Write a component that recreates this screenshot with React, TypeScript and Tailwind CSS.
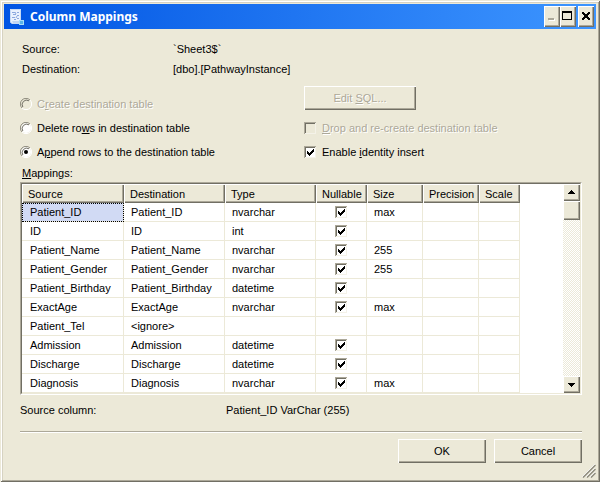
import type { ReactNode } from "react";

const raised =
  "bg-[#ece9d8] shadow-[inset_1px_1px_0_#fff,inset_-1px_-1px_0_#716f64,inset_-2px_-2px_0_#aca899]";
const disabledText = "text-[#aca899] [text-shadow:1px_1px_0_#fff]";

type Row = [name: string, target: string, type: string, nullable: boolean, size: string];

const rows: Row[] = [
  ["Patient_ID", "Patient_ID", "nvarchar", true, "max"],
  ["ID", "ID", "int", true, ""],
  ["Patient_Name", "Patient_Name", "nvarchar", true, "255"],
  ["Patient_Gender", "Patient_Gender", "nvarchar", true, "255"],
  ["Patient_Birthday", "Patient_Birthday", "datetime", true, ""],
  ["ExactAge", "ExactAge", "nvarchar", true, "max"],
  ["Patient_Tel", "<ignore>", "", false, ""],
  ["Admission", "Admission", "datetime", true, ""],
  ["Discharge", "Discharge", "datetime", true, ""],
  ["Diagnosis", "Diagnosis", "nvarchar", true, "max"],
];

const headers = ["Source", "Destination", "Type", "Nullable", "Size", "Precision", "Scale"];

function CheckBox({ id, checked, disabled, label }: { id?: string; checked?: boolean; disabled?: boolean; label?: string }) {
  return (
    <span className="inline-grid size-3 shrink-0">
      <input
        id={id}
        type="checkbox"
        aria-label={label}
        defaultChecked={checked}
        disabled={disabled}
        className={`peer col-start-1 row-start-1 size-3 appearance-none shadow-[inset_1px_1px_0_#aca899,inset_-1px_-1px_0_#f4f2e8,inset_2px_2px_0_#716f64] ${disabled ? "bg-[#ece9d8]" : "bg-white"}`}
      />
      <svg viewBox="0 0 12 12" shapeRendering="crispEdges" className="pointer-events-none invisible col-start-1 row-start-1 size-3 peer-checked:visible">
        <path d="M3 5h1v3h-1zM4 6h1v3h-1zM5 7h1v3h-1zM6 6h1v3h-1zM7 5h1v3h-1zM8 4h1v3h-1zM9 3h1v3h-1z" fill="#000" />
      </svg>
    </span>
  );
}

function Radio({ id, checked, disabled, children }: { id: string; checked?: boolean; disabled?: boolean; children: ReactNode }) {
  return (
    <div className="flex h-6 items-center gap-1">
      <span className="inline-grid size-3 shrink-0">
        <input id={id} name="mode" type="radio" defaultChecked={checked} disabled={disabled} className="peer col-start-1 row-start-1 size-3 appearance-none rounded-full" />
        <svg viewBox="0 0 12 12" className="pointer-events-none col-start-1 row-start-1 size-3">
          <circle cx="6" cy="6" r="5" fill={disabled ? "#ece9d8" : "#fff"} />
          <path d="M10 2A5.5 5.5 0 0 1 2 10" fill="none" stroke="#fff" />
          <path d="M2 10A5.5 5.5 0 0 1 10 2" fill="none" stroke="#8f8c7e" />
          <path d="M2.8 9A4.5 4.5 0 0 1 9 2.8" fill="none" stroke="#716f64" />
        </svg>
        <svg viewBox="0 0 12 12" className="pointer-events-none invisible col-start-1 row-start-1 size-3 peer-checked:visible">
          <circle cx="6" cy="6" r="2" fill="#000" />
        </svg>
      </span>
      <label htmlFor={id} className={`pl-px ${disabled ? disabledText : ""}`}>{children}</label>
    </div>
  );
}

function TitleIcon() {
  return (
    <svg viewBox="0 0 16 16" className="size-4" aria-hidden="true">
      <path d="M0 0h11v11l1 4H2l-2-2z" fill="#e9f1fd" />
      <path d="M0.500 0.500h10v10.500l1 3.500H2L0.500 13z" fill="none" stroke="#c5d9f6" />
      <path d="M2 12h8v2H3z" fill="#c2d5f2" />
      <path d="M2 3.500h3M7 3.500h2M3 5.500h3M7 6.500h2M2 8.500h3M7 9.500h2M4 10.500h2M5 3l1 2M7 7l-1 2" stroke="#8ba8de" fill="none" />
      <rect x="9.500" y="11.500" width="4" height="4" fill="#58b4ea" stroke="#a7dcf7" />
    </svg>
  );
}

export default function App() {
  return (
    <div className="flex min-h-screen flex-col bg-[#ece9d8] p-1 font-['Liberation_Sans',Arial,sans-serif] text-[11px] leading-4 text-black shadow-[inset_1px_1px_0_#ece9d8,inset_-1px_-1px_0_#716f64,inset_2px_2px_0_#fff,inset_-2px_-2px_0_#aca899,inset_3px_3px_0_#d6d2c2]">
      <header className="flex h-[25px] items-center bg-linear-to-r from-[#0054e3] to-[#3d95ff] pr-0.5 pl-1.5">
        <TitleIcon />
        <h1 className="flex-1 pl-1 font-['Noto_Sans','Open_Sans',sans-serif] text-[12px] font-bold text-white">Column Mappings</h1>
        <button type="button" disabled aria-label="Minimize" className={`flex h-[21px] w-4 items-center justify-center ${raised}`}>
          <svg viewBox="0 0 16 21" shapeRendering="crispEdges" className="h-[21px] w-4">
            <path d="M5 13h6v2h-6z" fill="#fff" />
            <path d="M4 12h6v2h-6z" fill="#aca899" />
          </svg>
        </button>
        <button type="button" aria-label="Maximize" className={`flex h-[21px] w-4 items-center justify-center ${raised}`}>
          <svg viewBox="0 0 16 21" shapeRendering="crispEdges" className="h-[21px] w-4">
            <path d="M2 5h10v9h-10zM3 7v6h8v-6z" fill="#000" fillRule="evenodd" />
          </svg>
        </button>
        <button type="button" aria-label="Close" className={`ml-0.5 flex h-[21px] w-4 items-center justify-center ${raised}`}>
          <svg viewBox="0 0 16 21" shapeRendering="crispEdges" className="h-[21px] w-4">
            <path d="M4 6h2v1h1v1h2v-1h1v-1h2v2h-1v1h-1v2h1v1h1v2h-2v-1h-1v-1h-2v1h-1v1h-2v-2h1v-1h1v-2h-1v-1h-1z" fill="#000" />
          </svg>
        </button>
      </header>

      <main className="flex flex-1 flex-col pt-2.5 pr-3.5 pl-4">
        <dl className="grid grid-cols-[151px_1fr] pl-0.5 leading-5">
          <dt>Source:</dt>
          <dd>`Sheet3$`</dd>
          <dt>Destination:</dt>
          <dd>[dbo].[PathwayInstance]</dd>
        </dl>

        <div className="grid grid-cols-[284px_1fr] pt-[13px]">
          <div>
            <Radio id="create" disabled>C<u>r</u>eate destination table</Radio>
            <Radio id="delete">Delete ro<u>w</u>s in destination table</Radio>
            <Radio id="append" checked>A<u>p</u>pend rows to the destination table</Radio>
          </div>
          <div>
            <div className="flex h-6 items-start">
              <button type="button" disabled className={`-mt-1.5 h-6 w-28 ${raised} ${disabledText}`}>Edit <u>S</u>QL...</button>
            </div>
            <div className="flex h-6 items-center gap-1.5">
              <CheckBox id="drop" disabled />
              <label htmlFor="drop" className={disabledText}><u>D</u>rop and re-create destination table</label>
            </div>
            <div className="flex h-6 items-center gap-1.5">
              <CheckBox id="identity" checked />
              <label htmlFor="identity">Enable <u>i</u>dentity insert</label>
            </div>
          </div>
        </div>

        <h2 id="mappings" className="py-px pl-0.5"><u>M</u>appings:</h2>

        <div className="flex border border-t-[#aca899] border-r-white border-b-white border-l-[#aca899] bg-white">
          <div className="flex flex-1 border border-t-[#716f64] border-r-[#ece9d8] border-b-[#ece9d8] border-l-[#716f64]">
            <div className="flex-1">
              <table aria-labelledby="mappings" className="w-[498px] table-fixed border-separate border-spacing-0">
                <colgroup>
                  <col className="w-[102px]" />
                  <col className="w-[101px]" />
                  <col className="w-[91px]" />
                  <col className="w-[51px]" />
                  <col className="w-14" />
                  <col className="w-14" />
                  <col className="w-[41px]" />
                </colgroup>
                <thead>
                  <tr className="h-[19px]">
                    {headers.map((h) => (
                      <th key={h} scope="col" className={`p-0 pl-1.5 text-left font-normal ${raised}`}>{h}</th>
                    ))}
                  </tr>
                </thead>
                <tbody>
                  {rows.map(([name, target, type, nullable, size], i) => (
                    <tr key={name} className="h-[19px] [&>td]:border-r [&>td]:border-b [&>td]:border-[#ece9d8] [&>td]:p-0 [&>td]:pl-[7px] [&>td:first-child]:pl-2">
                      <td className={i === 0 ? "bg-[#d1daf4] outline outline-1 -outline-offset-1 outline-dotted outline-black" : ""}>{name}</td>
                      <td>{target}</td>
                      <td>{type}</td>
                      <td>
                        <div className="flex items-center justify-center pr-2">
                          {nullable && <CheckBox checked label={`${name} nullable`} />}
                        </div>
                      </td>
                      <td>{size}</td>
                      <td />
                      <td />
                    </tr>
                  ))}
                </tbody>
              </table>
            </div>
            <div className="flex w-[17px] flex-col bg-[repeating-conic-gradient(#fff_0_25%,#ece9d8_0_50%)] bg-[length:2px_2px]">
              <button type="button" aria-label="Scroll up" className={`h-[17px] ${raised}`}>
                <svg viewBox="0 0 17 17" shapeRendering="crispEdges" className="size-[17px]"><path d="M8 6h1v1h1v1h1v1h1v1h-7v-1h1v-1h1v-1h1z" /></svg>
              </button>
              <div className={`h-[19px] ${raised}`} />
              <div className="flex-1" />
              <button type="button" aria-label="Scroll down" className={`h-[17px] ${raised}`}>
                <svg viewBox="0 0 17 17" shapeRendering="crispEdges" className="size-[17px]"><path d="M5 7h7v1h-1v1h-1v1h-1v1h-1v-1h-1v-1h-1v-1h-1z" /></svg>
              </button>
            </div>
          </div>
        </div>

        <dl className="grid grid-cols-[206px_1fr] pt-[7px]">
          <dt>Source column:</dt>
          <dd>Patient_ID VarChar (255)</dd>
        </dl>

        <hr className="mt-[13px] h-0.5 border-0 border-t border-b border-t-[#aca899] border-b-white" />

        <footer className="flex justify-end gap-2 pt-1.5">
          <button type="button" className={`h-6 w-[88px] ${raised}`}>OK</button>
          <button type="button" className={`h-6 w-[88px] ${raised}`}>Cancel</button>
        </footer>
      </main>
      <svg viewBox="0 0 14 14" className="size-3.5 self-end" aria-hidden="true">
        <path d="M0 13L13 0M4 13L13 4M8 13L13 8" stroke="#fff" />
        <path d="M1 13.500L13.500 1M5 13.500L13.500 5M9 13.500L13.500 9" stroke="#8f8c7e" strokeWidth="1.500" />
      </svg>
    </div>
  );
}
